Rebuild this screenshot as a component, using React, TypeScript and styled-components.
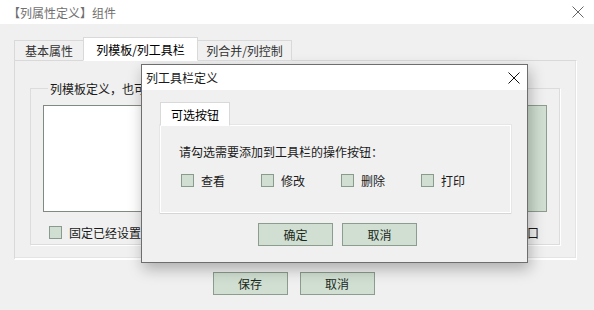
import styled, { createGlobalStyle } from 'styled-components'

const GlobalStyle = createGlobalStyle`
  body {
    margin: 0;
    background: #f0f0f0;
    font-family: 'Noto Sans CJK SC', 'Microsoft YaHei', sans-serif;
    font-size: 12px;
    color: #1a1a1a;
  }
`

const Window = styled.div`
  position: relative;
  width: 594px;
  height: 310px;
  overflow: hidden;
  background: #f0f0f0;
`

const TitleBar = styled.div<{ $dim?: boolean }>`
  display: flex;
  align-items: center;
  justify-content: space-between;
  height: 24px;
  padding: 0 10px 0 8px;
  background: #fff;
  color: ${({ $dim }) => ($dim ? '#707070' : '#1a1a1a')};
`

const CloseIcon = ({ color = '#555' }: { color?: string }) => (
  <svg width="12" height="12" viewBox="0 0 12 12">
    <path d="M0.5 0.5 L11.5 11.5 M11.5 0.5 L0.5 11.5" stroke={color} strokeWidth="1" />
  </svg>
)

const Body = styled.div`
  padding: 13px 17px 0 14px;
`

const TabStrip = styled.div`
  display: flex;
  align-items: flex-end;
  height: 23px;
`

const Tab = styled.div<{ $active?: boolean; $width: number }>`
  position: relative;
  z-index: ${({ $active }) => ($active ? 2 : 1)};
  display: flex;
  align-items: center;
  justify-content: center;
  box-sizing: border-box;
  width: ${({ $width }) => $width}px;
  height: ${({ $active }) => ($active ? 24 : 21)}px;
  margin-bottom: -1px;
  margin-left: ${({ $active }) => ($active ? '-1px' : '0')};
  margin-right: ${({ $active }) => ($active ? '-1px' : '0')};
  background: ${({ $active }) => ($active ? '#fff' : '#f0f0f0')};
  border: 1px solid #d9d9d9;
  border-bottom: ${({ $active }) => ($active ? '1px solid #fff' : '1px solid #d9d9d9')};
  color: ${({ $active }) => ($active ? '#000' : '#333')};
`

const TabPanel = styled.div`
  box-sizing: border-box;
  height: 200px;
  padding: 19px 16px 0 15px;
  border: 1px solid #d9d9d9;
  border-right-color: #fff;
  border-bottom: 2px solid #fff;
  box-shadow: inset -1px -1px 0 #e4e4e4;
`

const GroupBox = styled.fieldset`
  box-sizing: border-box;
  height: 165px;
  margin: 0;
  padding: 8px 12px 0 12px;
  border: 1px solid #dcdcdc;
  box-shadow: 1px 1px 0 #fff;
`

const Legend = styled.legend`
  margin-left: 5px;
  padding: 0 2px;
`

const EditRow = styled.div`
  display: flex;
  gap: 6px;
  height: 107px;
`

const TextBox = styled.div`
  flex: 1;
  background: #fff;
  border: 1px solid #7f8a80;
`

const SidePane = styled.div`
  width: 72px;
  background: linear-gradient(90deg, #c6d6c8, #d0dfd2);
  border: 1px solid #8c9c8e;
`

const OptionRow = styled.div`
  display: flex;
  align-items: center;
  justify-content: space-between;
  margin-top: 12px;
  padding: 0 8px 0 6px;
`

const CheckItem = styled.label<{ $width?: number }>`
  display: flex;
  flex: none;
  align-items: center;
  gap: 7px;
  width: ${({ $width }) => ($width ? `${$width}px` : 'auto')};
`

const Box = styled.span`
  box-sizing: border-box;
  width: 13px;
  height: 13px;
  background: #d0dfd2;
  border: 1px solid #8a9a8c;
`

const ButtonRow = styled.div<{ $top: number; $shift: number }>`
  display: flex;
  justify-content: center;
  gap: ${({ $shift }) => ($shift < 0 ? 12 : 9)}px;
  margin-top: ${({ $top }) => $top}px;
  padding-left: ${({ $shift }) => Math.max($shift, 0)}px;
  padding-right: ${({ $shift }) => Math.max(-$shift, 0)}px;
`

const Button = styled.button`
  box-sizing: border-box;
  width: 75px;
  height: 23px;
  padding: 0;
  background: #d0dfd2;
  border: 1px solid #8c9c8e;
  font: inherit;
  color: #1a2a1c;
`

const Dialog = styled.div`
  position: absolute;
  left: 141px;
  top: 64px;
  box-sizing: border-box;
  width: 387px;
  height: 199px;
  background: #f0f0f0;
  border: 1px solid #6e6e6e;
  box-shadow: 2px 6px 14px rgba(0, 0, 0, 0.28);
`

const DialogTitle = styled(TitleBar)`
  height: 25px;
  padding: 0 7px 0 4px;
`

const DialogBody = styled.div`
  padding: 12px 16px 0 18px;
`

const OptionPanel = styled.div`
  box-sizing: border-box;
  height: 88px;
  padding: 17px 10px 0 18px;
  background: #f0f0f0;
  border: 1px solid #fff;
  box-shadow: 0 1px 0 #d6d6d6, 0 0 0 1px #e6e6e6;
`

const ChoiceRow = styled.div`
  display: flex;
  margin-top: 12px;
  padding-left: 2px;
`

const tools = ['查看', '修改', '删除', '打印']

const App = () => (
  <Window>
    <GlobalStyle />
    <TitleBar $dim>
      <span>【列属性定义】组件</span>
      <CloseIcon color="#666" />
    </TitleBar>
    <Body>
      <TabStrip>
        <Tab $width={70}>基本属性</Tab>
        <Tab $active $width={115}>列模板/列工具栏</Tab>
        <Tab $width={95}>列合并/列控制</Tab>
      </TabStrip>
      <TabPanel>
        <GroupBox>
          <Legend>列模板定义，也可双击编辑</Legend>
          <EditRow>
            <TextBox />
            <SidePane />
          </EditRow>
          <OptionRow>
            <CheckItem>
              <Box />
              固定已经设置宽度的列
            </CheckItem>
            <span>窗口</span>
          </OptionRow>
        </GroupBox>
      </TabPanel>
      <ButtonRow $top={12} $shift={-4}>
        <Button>保存</Button>
        <Button>取消</Button>
      </ButtonRow>
    </Body>

    <Dialog>
      <DialogTitle>
        <span>列工具栏定义</span>
        <CloseIcon color="#111" />
      </DialogTitle>
      <DialogBody>
        <TabStrip>
          <Tab $active $width={70} style={{ marginLeft: 0 }}>可选按钮</Tab>
        </TabStrip>
        <OptionPanel>
          <div>请勾选需要添加到工具栏的操作按钮：</div>
          <ChoiceRow>
            {tools.map((t) => (
              <CheckItem key={t} $width={80}>
                <Box />
                {t}
              </CheckItem>
            ))}
          </ChoiceRow>
        </OptionPanel>
        <ButtonRow $top={10} $shift={4}>
          <Button>确定</Button>
          <Button>取消</Button>
        </ButtonRow>
      </DialogBody>
    </Dialog>
  </Window>
)

export default App
